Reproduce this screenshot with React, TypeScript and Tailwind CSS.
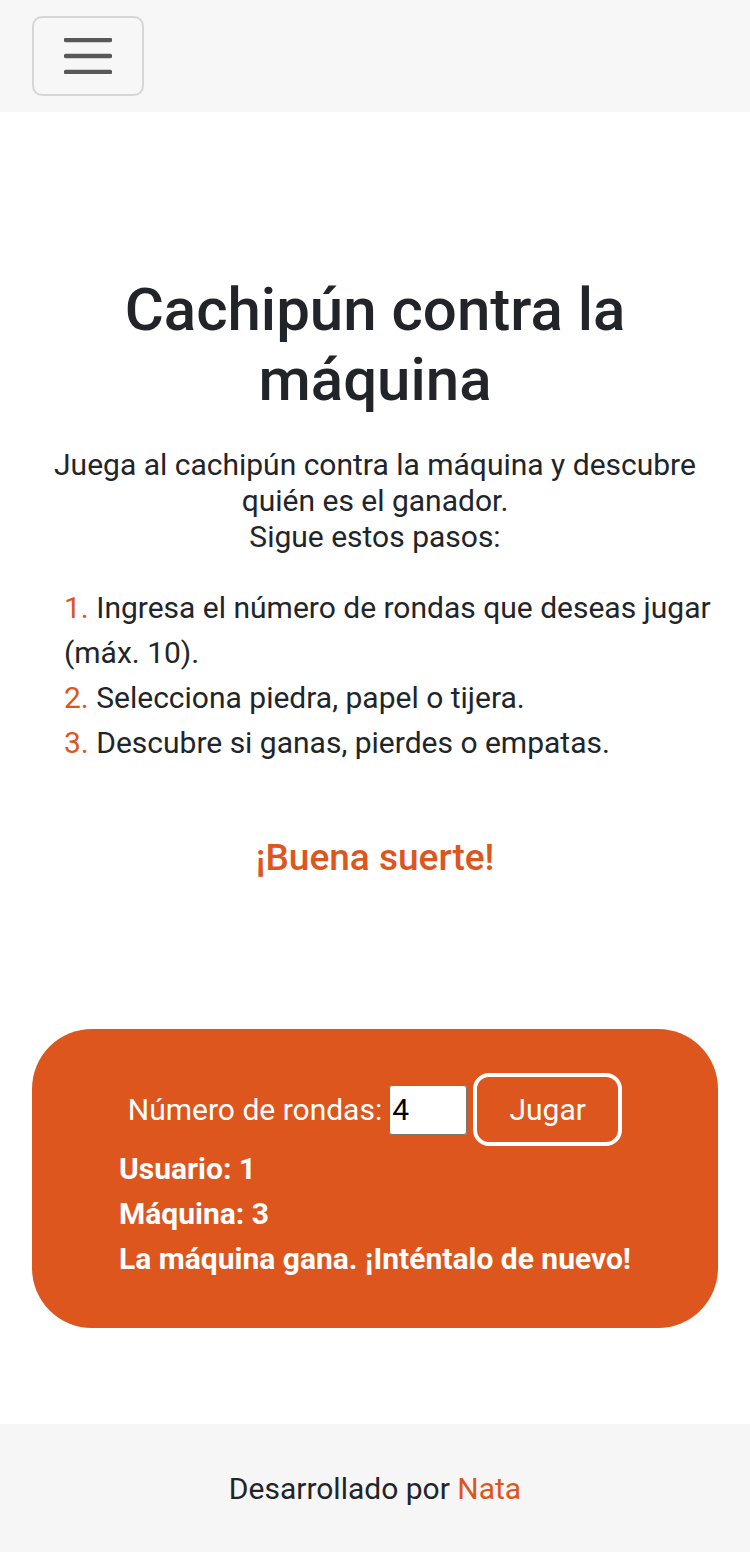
import React, { useState } from 'react';

const ORANGE = 'text-[#dc561e]';

const App: React.FC = () => {
  const [rounds, setRounds] = useState('4');

  return (
    <div className="min-h-screen w-full bg-white text-[#212529] font-['Roboto',sans-serif]">
      {/* Top bar */}
      <header className="h-[112px] bg-[#f7f7f7] px-8 py-4">
        <button className="w-[112px] h-[80px] rounded-[10px] border-2 border-[#d6d6d6] flex items-center justify-center">
          <svg width="48" height="36" viewBox="0 0 48 36">
            <g stroke="#595959" strokeWidth="4.5" strokeLinecap="round">
              <line x1="2" y1="2" x2="46" y2="2" />
              <line x1="2" y1="18" x2="46" y2="18" />
              <line x1="2" y1="34" x2="46" y2="34" />
            </g>
          </svg>
        </button>
      </header>

      <main className="px-8 pt-[163px]">
        <h1 className="text-[60px] leading-[70px] font-medium text-center">Cachipún contra la máquina</h1>

        <p className="mt-8 text-[30px] leading-[36px] text-center">
          Juega al cachipún contra la máquina y descubre quién es el ganador.
          <br />
          Sigue estos pasos:
        </p>

        <ol className="mt-[30px] pl-8 text-[30px] leading-[45px]">
          <li><span className={ORANGE}>1.</span> Ingresa el número de rondas que deseas jugar (máx. 10).</li>
          <li><span className={ORANGE}>2.</span> Selecciona piedra, papel o tijera.</li>
          <li><span className={ORANGE}>3.</span> Descubre si ganas, pierdes o empatas.</li>
        </ol>

        <p className={`mt-[74px] text-[37px] leading-[38px] font-medium text-center ${ORANGE}`}>¡Buena suerte!</p>

        {/* Game panel */}
        <section className="mt-[152px] rounded-[60px] bg-[#dc561e] text-white pt-[44px] pb-[47px]">
          <div className="flex items-center justify-center">
            <label className="text-[30px]">Número de rondas:</label>
            <input
              type="number"
              value={rounds}
              onChange={(e) => setRounds(e.target.value)}
              className="ml-[7px] w-[78px] h-[50px] bg-white text-black text-[30px] pl-[2px] border border-[#767676] rounded-[3px] outline-none [appearance:textfield] [&::-webkit-inner-spin-button]:appearance-none"
            />
            <button className="ml-[6px] w-[149px] h-[73px] rounded-[16px] border-4 border-white text-[30px] text-white">
              Jugar
            </button>
          </div>
          <div className="flex justify-center">
            <div className="text-[30px] leading-[45px] font-bold">
              <p>Usuario: 1</p>
              <p>Máquina: 3</p>
              <p>La máquina gana. ¡Inténtalo de nuevo!</p>
            </div>
          </div>
        </section>
      </main>

      <footer className="mt-[96px] h-[128px] bg-[#f6f6f6] flex items-center justify-center text-[30px]">
        <p>
          Desarrollado por <span className={ORANGE}>Nata</span>
        </p>
      </footer>
    </div>
  );
};

export default App;
